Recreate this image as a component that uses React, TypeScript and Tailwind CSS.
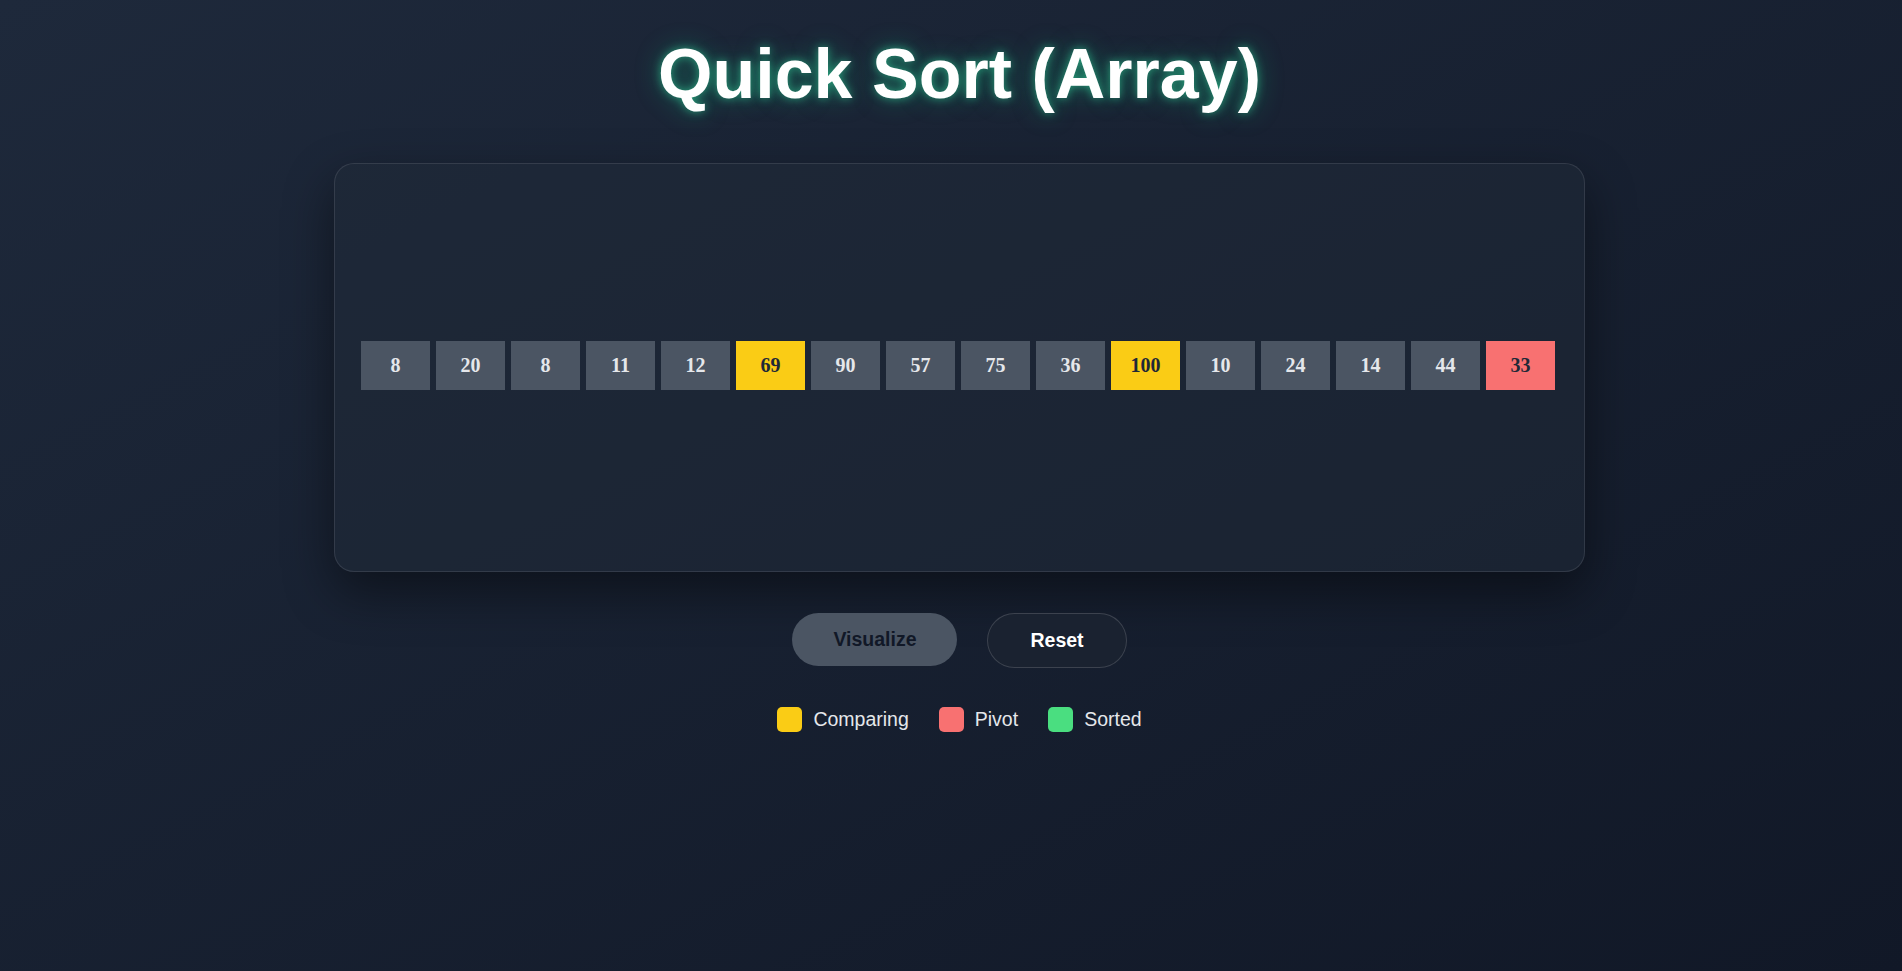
const values = [8, 20, 8, 11, 12, 69, 90, 57, 75, 36, 100, 10, 24, 14, 44, 33];
const comparing = [5, 10];
const pivot = 15;

function Bar({ value, index }: { value: number; index: number }) {
  let tone = "bg-[#4b5563] text-[#e5e7eb]";
  if (comparing.includes(index)) tone = "bg-[#facc15] text-[#1f2937]";
  if (index === pivot) tone = "bg-[#f87171] text-[#1f2937]";
  return (
    <div
      className={`flex h-[49px] flex-1 items-center justify-center text-[20px] font-bold ${tone}`}
      style={{ fontFamily: '"Liberation Serif", "Times New Roman", serif' }}
    >
      {value}
    </div>
  );
}

function Legend({ color, label }: { color: string; label: string }) {
  return (
    <div className="flex items-center gap-[11px]">
      <span className={`h-[25px] w-[25px] rounded-[5px] ${color}`} />
      <span className="text-[19.5px] text-[#e5e7eb]">{label}</span>
    </div>
  );
}

export default function App() {
  return (
    <div
      className="flex min-h-[971px] flex-col items-center bg-gradient-to-br from-[#1e293b] to-[#111827] pt-[35px] pl-[17px]"
      style={{ fontFamily: '"Liberation Sans", Arial, sans-serif' }}
    >
      <h1 className="mb-[49px] text-[70px] leading-[79px] font-bold text-white [text-shadow:0_0_10px_rgba(52,211,153,0.65),0_0_26px_rgba(16,185,129,0.45)]">
        Quick Sort (Array)
      </h1>

      <section className="flex h-[409px] w-[1251px] items-center rounded-[20px] border border-white/10 bg-[#1f2937]/50 pr-[29px] pb-[5px] pl-[26px] shadow-[0_20px_50px_rgba(0,0,0,0.45)]">
        <div className="flex w-full gap-[6px]">
          {values.map((v, i) => (
            <Bar key={i} value={v} index={i} />
          ))}
        </div>
      </section>

      <div className="mt-[41px] flex gap-[30px]">
        <button className="h-[53px] rounded-full border border-transparent bg-[#4b5563] px-[40px] text-[19.5px] font-bold text-[#111827]">
          Visualize
        </button>
        <button className="h-[55px] rounded-full border border-white/15 bg-[#1a2230] px-[42px] text-[19.5px] font-bold text-white">
          Reset
        </button>
      </div>

      <div className="mt-[37px] flex gap-[30px]">
        <Legend color="bg-[#facc15]" label="Comparing" />
        <Legend color="bg-[#f87171]" label="Pivot" />
        <Legend color="bg-[#4ade80]" label="Sorted" />
      </div>
    </div>
  );
}
